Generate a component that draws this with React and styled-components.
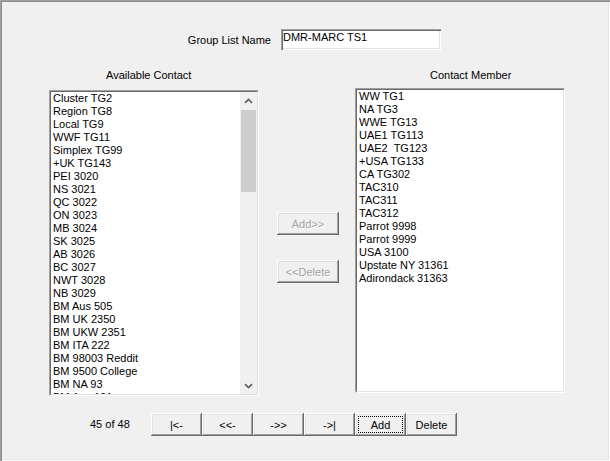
import React from "react";
import styled, { createGlobalStyle } from "styled-components";

const GlobalStyle = createGlobalStyle`
  html, body { margin: 0; padding: 0; background: #f0f0f0; }
  body { font-family: "Liberation Sans", Arial, sans-serif; font-size: 11px; color: #000; }
`;

const Frame = styled.div`
  width: 610px;
  height: 461px;
  box-sizing: border-box;
  background: #f0f0f0;
  display: flex;
  flex-direction: column;
  overflow: hidden;
  box-shadow: inset 1px 1px 0 #a0a0a0, inset 2px 2px 0 #8a8a8a,
    inset -1px -1px 0 #ffffff, inset -2px -2px 0 #e3e3e3;
`;

const HeaderRow = styled.div`
  display: flex;
  padding: 29px 0 0 181px;
  height: 21px;
`;

const FieldLabel = styled.div`
  width: 90px;
  text-align: right;
  line-height: 13px;
  margin-top: 5px;
`;

const NameField = styled.div`
  margin-left: 10px;
  width: 160px;
  height: 21px;
  box-sizing: border-box;
  background: #fff;
  padding: 2px 2px 0 2px;
  line-height: 13px;
  box-shadow: inset 1px 1px 0 #a0a0a0, inset 2px 2px 0 #696969,
    inset -1px -1px 0 #ffffff, inset -2px -2px 0 #e3e3e3;
`;

const Main = styled.div`
  display: flex;
  padding-left: 49px;
`;

const Column = styled.div`
  width: 210px;
  display: flex;
  flex-direction: column;
  margin-left: ${(p) => p.$ml || 0}px;
  padding-top: 19px;
`;

const ColumnLabel = styled.div`
  line-height: 13px;
  height: 13px;
  padding-left: ${(p) => p.$indent}px;
`;

const ListBox = styled.div`
  margin-top: ${(p) => p.$mt}px;
  height: ${(p) => p.$h}px;
  box-sizing: border-box;
  border-style: solid;
  border-width: 1px;
  border-color: #a0a0a0 #ffffff #ffffff #a0a0a0;
`;

const ListInner = styled.div`
  height: 100%;
  box-sizing: border-box;
  border-style: solid;
  border-width: 1px;
  border-color: #696969 #e3e3e3 #e3e3e3 #696969;
  background: #fff;
  display: flex;
  overflow: hidden;
`;

const Items = styled.div`
  flex: 1;
  overflow: hidden;
`;

const Item = styled.div`
  height: 13px;
  line-height: 13px;
  padding-left: 2px;
  white-space: pre;
`;

const ScrollBar = styled.div`
  width: 17px;
  background: #f0f0f0;
  display: flex;
  flex-direction: column;
`;

const ArrowBox = styled.div`
  height: 17px;
  display: flex;
  align-items: center;
  justify-content: center;
`;

const Track = styled.div`
  flex: 1;
  padding: 1px 1px 0 1px;
`;

const Thumb = styled.div`
  height: 82px;
  background: #cdcdcd;
`;

const MiddleColumn = styled.div`
  width: 62px;
  margin-left: 18px;
  padding-top: 162px;
  display: flex;
  flex-direction: column;
  gap: 25px;
`;

const WinButton = styled.button`
  width: ${(p) => p.$w}px;
  height: 23px;
  box-sizing: border-box;
  border: none;
  padding: 0;
  margin: 0;
  background: #f0f0f0;
  font-family: "Liberation Sans", Arial, sans-serif;
  font-size: 11px;
  color: ${(p) => (p.disabled ? "#a0a0a0" : "#000")};
  text-shadow: ${(p) => (p.disabled ? "1px 1px 0 #fff" : "none")};
  box-shadow: inset -1px -1px 0 #696969, inset 1px 1px 0 #ffffff,
    inset -2px -2px 0 #a0a0a0, inset 2px 2px 0 #e3e3e3;
  outline: ${(p) => (p.$focused ? "1px dotted #000" : "none")};
  outline-offset: -4px;
  flex: none;
`;

const Footer = styled.div`
  display: flex;
  align-items: center;
  margin-top: 17px;
  padding-left: 90px;
`;

const Count = styled.div`
  width: 61px;
  line-height: 13px;
`;

const ButtonGroup = styled.div`
  display: flex;
`;

const Chevron = ({ down }) => (
  <svg width="9" height="6" viewBox="0 0 9 6">
    <path
      d={down ? "M1 1.2 L4.5 4.5 L8 1.2" : "M1 4.8 L4.5 1.5 L8 4.8"}
      fill="none"
      stroke="#606060"
      strokeWidth="1.7"
    />
  </svg>
);

const available = [
  "Cluster TG2",
  "Region TG8",
  "Local TG9",
  "WWF TG11",
  "Simplex TG99",
  "+UK TG143",
  "PEI 3020",
  "NS 3021",
  "QC 3022",
  "ON 3023",
  "MB 3024",
  "SK 3025",
  "AB 3026",
  "BC 3027",
  "NWT 3028",
  "NB 3029",
  "BM Aus 505",
  "BM UK 2350",
  "BM UKW 2351",
  "BM ITA 222",
  "BM 98003 Reddit",
  "BM 9500 College",
  "BM NA 93",
  "BM Aus 101",
];

const members = [
  "WW TG1",
  "NA TG3",
  "WWE TG13",
  "UAE1 TG113",
  "UAE2  TG123",
  "+USA TG133",
  "CA TG302",
  "TAC310",
  "TAC311",
  "TAC312",
  "Parrot 9998",
  "Parrot 9999",
  "USA 3100",
  "Upstate NY 31361",
  "Adirondack 31363",
];

const navButtons = [
  { label: "|<-" },
  { label: "<<-" },
  { label: "->>" },
  { label: "->|" },
  { label: "Add", focused: true },
  { label: "Delete" },
];

export default function App() {
  return (
    <>
      <GlobalStyle />
      <Frame>
        <HeaderRow>
          <FieldLabel>Group List Name</FieldLabel>
          <NameField>DMR-MARC TS1</NameField>
        </HeaderRow>
        <Main>
          <Column>
            <ColumnLabel $indent={57}>Available Contact</ColumnLabel>
            <ListBox $mt={8} $h={306}>
              <ListInner>
                <Items>
                  {available.map((t) => (
                    <Item key={t}>{t}</Item>
                  ))}
                </Items>
                <ScrollBar>
                  <ArrowBox>
                    <Chevron />
                  </ArrowBox>
                  <Track>
                    <Thumb />
                  </Track>
                  <ArrowBox>
                    <Chevron down />
                  </ArrowBox>
                </ScrollBar>
              </ListInner>
            </ListBox>
          </Column>
          <MiddleColumn>
            <WinButton $w={62} disabled>
              Add&gt;&gt;
            </WinButton>
            <WinButton $w={62} disabled>
              &lt;&lt;Delete
            </WinButton>
          </MiddleColumn>
          <Column $ml={16}>
            <ColumnLabel $indent={75}>Contact Member</ColumnLabel>
            <ListBox $mt={6} $h={305}>
              <ListInner>
                <Items>
                  {members.map((t) => (
                    <Item key={t}>{t}</Item>
                  ))}
                </Items>
              </ListInner>
            </ListBox>
          </Column>
        </Main>
        <Footer>
          <Count>45 of 48</Count>
          <ButtonGroup>
            {navButtons.map((b) => (
              <WinButton key={b.label} $w={51} $focused={b.focused}>
                {b.label}
              </WinButton>
            ))}
          </ButtonGroup>
        </Footer>
      </Frame>
    </>
  );
}
